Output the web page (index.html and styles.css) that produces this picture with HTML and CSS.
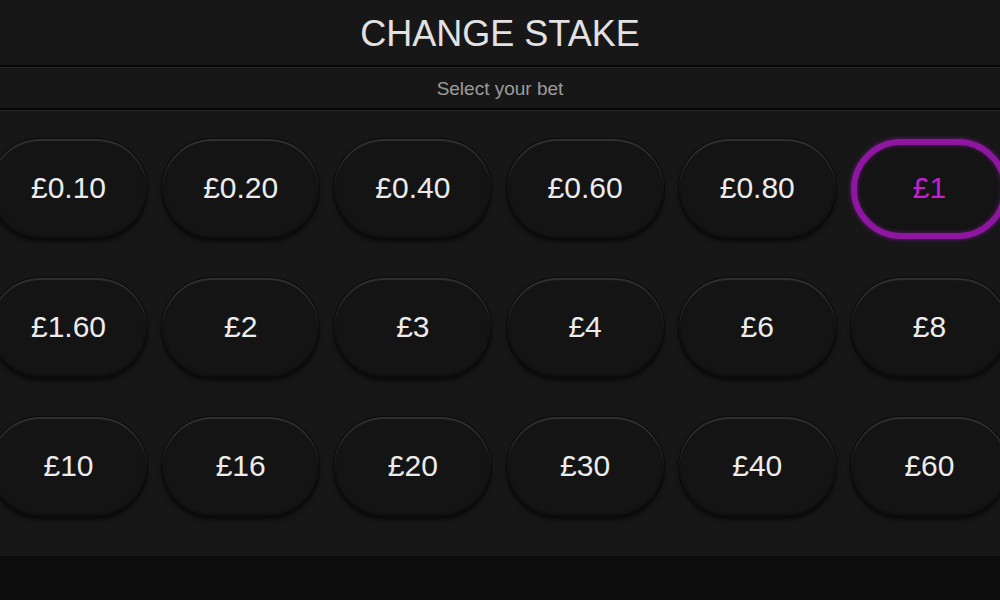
FILE: index.html
```html
<!DOCTYPE html>
<html lang="en">
<head>
    <meta charset="UTF-8">
    <title>Change Stake</title>
    <link rel="stylesheet" href="styles.css">
</head>
<body>
    <div class="panel">
        <h1 class="title">CHANGE STAKE</h1>
        <div class="subtitle">Select your bet</div>
        <div class="stakes">
            <button class="chip">£0.10</button>
            <button class="chip">£0.20</button>
            <button class="chip">£0.40</button>
            <button class="chip">£0.60</button>
            <button class="chip">£0.80</button>
            <button class="chip selected">£1</button>
            <button class="chip">£1.60</button>
            <button class="chip">£2</button>
            <button class="chip">£3</button>
            <button class="chip">£4</button>
            <button class="chip">£6</button>
            <button class="chip">£8</button>
            <button class="chip">£10</button>
            <button class="chip">£16</button>
            <button class="chip">£20</button>
            <button class="chip">£30</button>
            <button class="chip">£40</button>
            <button class="chip">£60</button>
        </div>
    </div>
</body>
</html>
```

FILE: styles.css
```css
html, body {
    margin: 0;
    height: 100%;
    overflow: hidden;
}
body {
    background: #0d0d0d;
    font-family: 'Liberation Sans', Arial, sans-serif;
    color: #e6e6e6;
}
.panel {
    background: #171717;
}
.title {
    margin: 0;
    height: 65px;
    line-height: 68px;
    font-size: 36px;
    font-weight: normal;
    text-align: center;
    color: #e2e2e2;
    border-bottom: 2px solid #070707;
}
.subtitle {
    height: 40px;
    line-height: 42px;
    font-size: 19px;
    text-align: center;
    color: #9c9c9c;
    border-top: 1px solid #2c2c2c;
    border-bottom: 2px solid #070707;
}
.stakes {
    border-top: 1px solid #262626;
    display: grid;
    grid-template-columns: repeat(6, 157px);
    column-gap: 15.2px;
    row-gap: 39px;
    padding: 28px 0 39px;
    margin-left: -10px;
    width: 1030px;
}
.chip {
    height: 100px;
    border: none;
    border-radius: 50px;
    background: #141414;
    color: #ececec;
    font-family: 'Liberation Sans', Arial, sans-serif;
    font-size: 30px;
    padding: 0 0 2px;
    box-shadow: inset 0 2px 1px rgba(255, 255, 255, 0.13),
                inset 0 -2px 3px rgba(0, 0, 0, 0.5),
                0 0 0 1px #0b0b0b,
                0 3px 5px rgba(0, 0, 0, 0.55);
}
.chip.selected {
    color: #c51fd6;
    border: 6px solid #8e16a0;
    box-shadow: 0 0 4px rgba(170, 30, 200, 0.6),
                inset 0 0 4px rgba(170, 30, 200, 0.5);
}
```
